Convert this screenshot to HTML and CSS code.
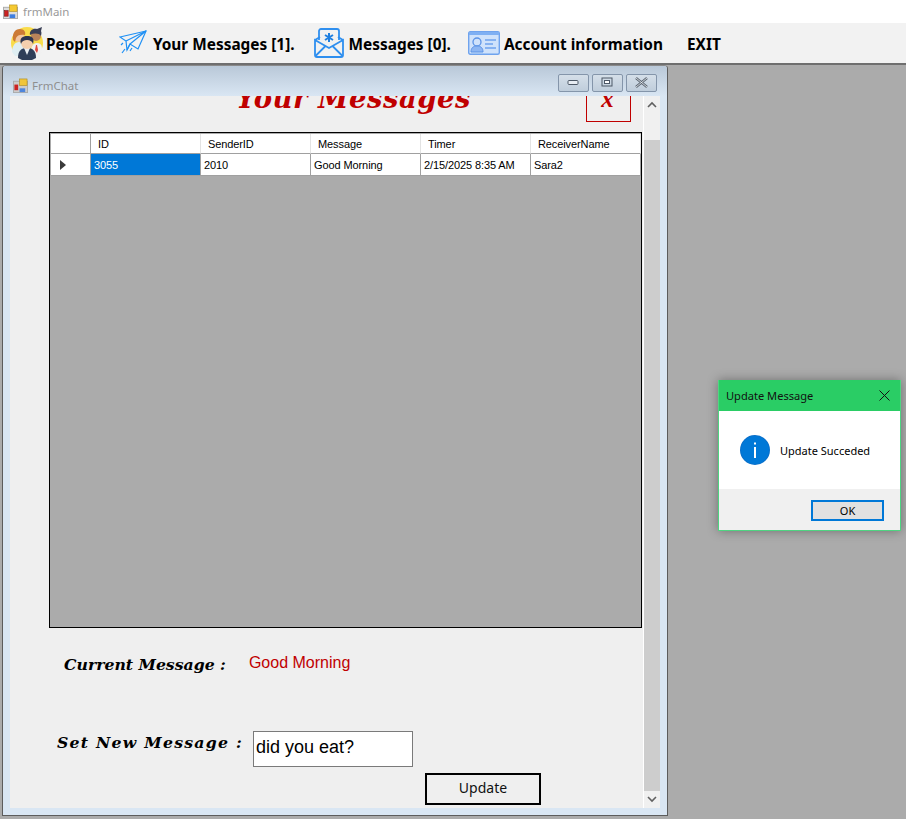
FILE: index.html
```html
<!doctype html>
<html>
<head>
<title>frmMain</title>
<meta charset="utf-8" />
<link rel="stylesheet" href="styles.css">
</head>
<body>
    <header class="app-title">
        <svg class="app-icon" width="15" height="15" viewBox="0 0 16 16"><rect x="0.500" y="3.500" width="15" height="12" fill="#ddd" stroke="#aaa"/><rect x="1.500" y="7" width="4" height="6" fill="#c22" stroke="#711" stroke-width="0.600"/><rect x="7" y="1" width="8" height="7" fill="#f5c932" stroke="#a8861a" stroke-width="0.600"/><rect x="7" y="11" width="6" height="4" fill="#3f7fe0"/></svg>
        <span>frmMain</span>
    </header>

    <nav class="menu">
        <a class="menu-item item-people">
            <svg width="34" height="34" viewBox="0 0 34 34">
                <circle cx="17" cy="17" r="16" fill="#f9dc4a"/>
                <path d="M2 26c0-6 3-10 7-10s7 3 7 14H5z" fill="#dfeef2"/>
                <circle cx="9" cy="11" r="5" fill="#f2c6a2"/>
                <path d="M3 14C2 6 6 3 10 3s6 3 5 6c-4-1-8 0-9 3l-1 4z" fill="#cc7a35"/>
                <path d="M21 30c-1-8 1-13 6-13s5 4 5 8l-4 6z" fill="#f1f1f1"/>
                <path d="M26 19l-1 5 2 3 1-3-1-5z" fill="#e0473f"/>
                <circle cx="26" cy="10" r="5" fill="#b9835a"/>
                <path d="M20 9c-1-4 3-7 7-6l5-2-1 4c1 2 0 4 0 5-2-3-7-3-11-1z" fill="#3a3f55"/>
                <path d="M8 32c0-7 3-10 9-10s9 3 9 10l-4 2H12z" fill="#2f3e58"/>
                <path d="M14 22h6l-3 7z" fill="#e9eef3"/>
                <circle cx="17" cy="17" r="6" fill="#f4cfae"/>
                <path d="M11 18c-2-6 2-8 6-8s8 1 6 8c-1-3-3-4-6-4s-5 1-6 4z" fill="#2c3550"/>
            </svg>
            <span>People</span>
        </a>
        <a class="menu-item item-sent">
            <svg width="28" height="28" viewBox="0 0 28 28" fill="none" stroke="#1e90f5" stroke-width="1.200">
                <path d="M1 8L27 2 19 20 11 15 8 21 7 12z"/>
                <path d="M27 2L7 12M27 2L11 15M8 21l3-6"/>
                <path d="M6 20l-3 4M13 19l-2 3M4 14l-2 2"/>
            </svg>
            <span>Your Messages [1].</span>
        </a>
        <a class="menu-item item-inbox">
            <svg width="30" height="30" viewBox="0 0 30 30" fill="none" stroke="#2f8fef" stroke-width="1.800">
                <path d="M5 12V3a2 2 0 0 1 2-2h16a2 2 0 0 1 2 2v9"/>
                <path d="M1 12l5-3M29 12l-5-3"/>
                <path d="M1 12v15a2 2 0 0 0 2 2h24a2 2 0 0 0 2-2V12L15 20z"/>
                <path d="M1.500 28l10-10M28.500 28l-10-10"/>
                <path d="M15 5v9M11 7l8 5M19 7l-8 5" stroke="#1f7fe0" stroke-width="2"/>
            </svg>
            <span>Messages [0].</span>
        </a>
        <a class="menu-item item-account">
            <svg width="32" height="24" viewBox="0 0 32 24">
                <rect x="0.700" y="0.700" width="30.600" height="22.600" rx="1.500" fill="#cfe2fb" stroke="#6fa3ee" stroke-width="1.400"/>
                <path d="M1 1h30v3H1z" fill="#7fb0f3"/>
                <circle cx="9" cy="11" r="4" fill="none" stroke="#5b93e6" stroke-width="1.300"/>
                <path d="M3 21c0-4 2-6 6-6s6 2 6 6z" fill="#8db6f2" stroke="#5b93e6"/>
                <path d="M17 9h11M17 13h8M17 17h11" stroke="#6fa3ee" stroke-width="1.500"/>
            </svg>
            <span>Account information</span>
        </a>
        <a class="menu-item item-exit"><span>EXIT</span></a>
    </nav>

    <main class="desktop">
        <section class="chat-window">
            <div class="chat-titlebar">
                <svg class="app-icon" width="15" height="15" viewBox="0 0 16 16"><rect x="0.500" y="3.500" width="15" height="12" fill="#ccc" stroke="#aaa"/><rect x="1.500" y="7" width="4" height="6" fill="#c22"/><rect x="7" y="1" width="8" height="7" fill="#f0c53a" stroke="#a8861a" stroke-width="0.600"/><rect x="7" y="11" width="6" height="4" fill="#4f86dc"/></svg>
                <span class="chat-caption">FrmChat</span>
                <div class="caption-btns">
                    <button class="caption-btn"><svg width="13" height="7" viewBox="0 0 13 7"><rect x="1" y="1.500" width="10" height="4" rx="1" fill="#e8edf3" stroke="#4d5866"/></svg></button>
                    <button class="caption-btn"><svg width="13" height="11" viewBox="0 0 13 11"><rect x="1" y="1" width="10" height="8" fill="none" stroke="#4d5866"/><rect x="3.500" y="3.500" width="5" height="3" fill="#fff" stroke="#4d5866"/></svg></button>
                    <button class="caption-btn"><svg width="15" height="11" viewBox="0 0 15 11"><path d="M2 1l11 9M13 1L2 10" stroke="#59636f" stroke-width="2.400"/><path d="M2 1l11 9M13 1L2 10" stroke="#eef1f5" stroke-width="0.800"/></svg></button>
                </div>
            </div>
            <div class="chat-client">
                <div class="chat-form">
                    <div class="form-head">
                        <h1>Your Messages</h1>
                        <div class="close-box">x</div>
                    </div>
                    <div class="grid">
                        <div class="grid-row grid-header">
                            <div class="cell row-head"></div>
                            <div class="cell">ID</div>
                            <div class="cell">SenderID</div>
                            <div class="cell">Message</div>
                            <div class="cell">Timer</div>
                            <div class="cell">ReceiverName</div>
                        </div>
                        <div class="grid-row grid-data">
                            <div class="cell row-head"><span class="row-arrow"></span></div>
                            <div class="cell selected">3055</div>
                            <div class="cell">2010</div>
                            <div class="cell">Good Morning</div>
                            <div class="cell">2/15/2025 8:35 AM</div>
                            <div class="cell">Sara2</div>
                        </div>
                    </div>
                    <div class="current-row">
                        <label class="fancy">Current Message :</label>
                        <span class="current-value">Good Morning</span>
                    </div>
                    <div class="new-row">
                        <label class="fancy">Set New Message :</label>
                        <input class="new-input" type="text" value="did you eat?">
                    </div>
                    <button class="update-btn">Update</button>
                </div>
                <div class="vscroll">
                    <div class="scroll-arrow"><svg width="10" height="7" viewBox="0 0 10 7"><path d="M1 6l4-4 4 4" fill="none" stroke="#606060" stroke-width="1.600"/></svg></div>
                    <div class="scroll-thumb"></div>
                    <div class="scroll-arrow scroll-arrow-down"><svg width="10" height="7" viewBox="0 0 10 7"><path d="M1 1l4 4 4-4" fill="none" stroke="#606060" stroke-width="1.600"/></svg></div>
                </div>
            </div>
        </section>

        <section class="msgbox">
            <div class="msgbox-title">
                <span>Update Message</span>
                <svg width="11" height="11" viewBox="0 0 11 11"><path d="M0.500 0.500l10 10M10.500 0.500l-10 10" stroke="#111" stroke-width="1"/></svg>
            </div>
            <div class="msgbox-body">
                <svg width="30" height="30" viewBox="0 0 30 30"><circle cx="15" cy="15" r="15" fill="#0a6fc9"/><circle cx="15" cy="15" r="14" fill="#0078d7"/><rect x="14" y="12" width="2" height="11" fill="#fff"/><rect x="14" y="7.500" width="2" height="2" fill="#fff"/></svg>
                <span>Update Succeded</span>
            </div>
            <div class="msgbox-foot"><button class="ok-btn">OK</button></div>
        </section>
    </main>
</body>
</html>
```

FILE: styles.css
```css
*{
    margin: 0;
    padding: 0;
    box-sizing: border-box;
}
html, body{
    width: 906px;
    height: 819px;
    overflow: hidden;
}
body{
    display: flex;
    flex-direction: column;
    background: #ababab;
    font-family: "Noto Sans", "Liberation Sans", sans-serif;
}
svg{display: block; flex: none;}
button{font-family: inherit;}

.app-title{
    height: 23px;
    flex: none;
    background: #fff;
    display: flex;
    align-items: center;
    padding: 0 0 0 3px;
    font-size: 11.500px;
    color: #9a9a9a;
}
.app-title span{margin-left: 5px;}

.menu{
    height: 42px;
    flex: none;
    background: #f2f2f2;
    border-bottom: 2px solid #6f6f6f;
    display: flex;
    align-items: center;
    font-size: 15.400px;
    font-weight: 700;
    color: #000;
}
.menu-item{display: flex; align-items: center; white-space: nowrap;}
.menu-item span{margin-top: 2px;}
.item-people{margin-left: 10px; gap: 2px;}
.item-sent{margin-left: 21px; gap: 6px;}
.item-inbox{margin-left: 19px; gap: 5px;}
.item-account{margin-left: 17px; gap: 4px;}
.item-exit{margin-left: 24px;}

.desktop{
    flex: 1;
    position: relative;
}
.chat-window{
    position: absolute;
    left: 2px;
    top: 0;
    width: 666px;
    height: 751px;
    border: 1px solid #5c5c5c;
    border-top-color: #8a8a8a;
    border-radius: 4px 4px 0 0;
    background: #d9e6f3;
    display: flex;
    flex-direction: column;
}
.chat-titlebar{
    height: 30px;
    flex: none;
    background: linear-gradient(#b9c8d8, #d9e6f3);
    display: flex;
    align-items: center;
    padding: 9px 10px 0 10px;
    border-radius: 3px 3px 0 0;
}
.chat-caption{
    margin-left: 4px;
    font-size: 11.500px;
    color: #8f8f8f;
}
.caption-btns{
    margin-left: auto;
    display: flex;
    gap: 3px;
    margin-top: -6px;
}
.caption-btn{
    width: 31px;
    height: 18px;
    border: 1px solid #8495aa;
    border-radius: 2px;
    background: linear-gradient(#d5dfe9, #bfcddb);
    display: flex;
    align-items: center;
    justify-content: center;
}
.chat-client{
    flex: 1;
    margin: 0 7px 7px 7px;
    display: flex;
    background: #efefef;
    overflow: hidden;
}
.chat-form{
    width: 634px;
    flex: none;
    border-right: 1px solid #fff;
    overflow: hidden;
}
.form-head{
    height: 36px;
    position: relative;
    display: flex;
    justify-content: center;
}
.form-head h1{
    margin: -18px 0 0 54px;
    height: 40px;
    font-family: "DejaVu Serif", "Liberation Serif", serif;
    font-style: italic;
    font-weight: 700;
    font-size: 27.500px;
    line-height: 40px;
    letter-spacing: 0.500px;
    color: #c00000;
    white-space: nowrap;
}
.close-box{
    position: absolute;
    left: 576px;
    top: -10px;
    width: 45px;
    height: 36px;
    border: 1px solid #c00000;
    padding-right: 2px;
    text-align: center;
    font-family: "Liberation Serif", serif;
    font-style: italic;
    font-weight: 700;
    font-size: 25px;
    line-height: 24px;
    color: #c00000;
}

.grid{
    margin-left: 39px;
    width: 593px;
    height: 496px;
    border: 1px solid #000;
    padding: 1px 0 0 1px;
    background: #ababab;
    font-family: "Liberation Sans", sans-serif;
    font-size: 11px;
    letter-spacing: -0.100px;
}
.grid-row{
    display: grid;
    grid-template-columns: 40px repeat(5, 110px);
    background: #fff;
    width: 590px;
}
.cell{
    border-right: 1px solid #a0a0a0;
    border-bottom: 1px solid #a0a0a0;
    white-space: nowrap;
    overflow: hidden;
}
.grid-header{height: 20px;}
.grid-header .cell{
    padding-left: 7px;
    line-height: 20px;
    border-right-color: #e3e3e3;
}
.grid-header .row-head{border-right-color: #a0a0a0;}
.grid-data{height: 22px;}
.grid-data .cell{
    padding-left: 3px;
    line-height: 23px;
}
.row-head{display: flex; align-items: center;}
.row-arrow{
    margin-left: 6px;
    width: 0;
    height: 0;
    border-left: 6px solid #3a3a3a;
    border-top: 5px solid transparent;
    border-bottom: 5px solid transparent;
}
.cell.selected{
    background: #0078d7;
    color: #fff;
}

.fancy{
    font-family: "DejaVu Serif", "Liberation Serif", serif;
    font-style: italic;
    font-weight: 700;
    font-size: 15.700px;
    color: #000;
    white-space: nowrap;
}
.current-row{
    margin: 25px 0 0 54px;
    display: flex;
    align-items: center;
    height: 22px;
    gap: 23px;
}
.current-value{
    font-family: "Liberation Sans", sans-serif;
    font-size: 16px;
    color: #c00000;
    margin-top: -3px;
}
.new-row{
    margin: 56px 0 0 47px;
    display: flex;
    align-items: flex-start;
    gap: 10px;
}
.new-row .fancy{
    margin-top: 2px;
    letter-spacing: 1.250px;
}
.new-input{
    width: 160px;
    height: 36px;
    border: 1px solid #7a7a7a;
    padding: 0 2px 3px;
    background: #fff;
    font-family: "Liberation Sans", sans-serif;
    font-size: 18px;
    color: #000;
    outline: 0;
}
.update-btn{
    display: block;
    margin: 6px 0 0 415px;
    width: 116px;
    height: 32px;
    border: 2px solid #000;
    padding-bottom: 3px;
    background: #efefef;
    font-size: 14px;
    color: #111;
}

.vscroll{
    width: 16px;
    flex: none;
    background: #f0f0f0;
    display: flex;
    flex-direction: column;
}
.scroll-arrow{
    height: 20px;
    flex: none;
    display: flex;
    justify-content: center;
    padding-top: 5px;
}
.scroll-arrow-down{height: 17px; padding-top: 5px;}
.scroll-thumb{
    flex: 1;
    margin-top: 24px;
    background: #cdcdcd;
}

.msgbox{
    position: absolute;
    left: 718px;
    top: 315px;
    width: 183px;
    height: 151px;
    background: #fff;
    border: 1px solid #4fd481;
    border-top: 0;
    box-shadow: 0 0 10px rgba(0,0,0,0.35);
    display: flex;
    flex-direction: column;
    font-size: 11px;
}
.msgbox-title{
    height: 31px;
    flex: none;
    background: #2acd65;
    display: flex;
    align-items: center;
    justify-content: space-between;
    padding: 0 10px 0 7px;
    font-size: 11.100px;
    color: #111;
}
.msgbox-body{
    height: 78px;
    flex: none;
    display: flex;
    align-items: center;
    gap: 10px;
    padding: 0 0 0 21px;
    color: #000;
}
.msgbox-foot{
    flex: 1;
    background: #f0f0f0;
    display: flex;
    justify-content: flex-end;
    align-items: flex-start;
    padding: 11px 16px 0 0;
}
.ok-btn{
    width: 73px;
    height: 21px;
    border: 2px solid #0078d7;
    background: #e1e1e1;
    font-size: 11px;
    color: #000;
}
```
